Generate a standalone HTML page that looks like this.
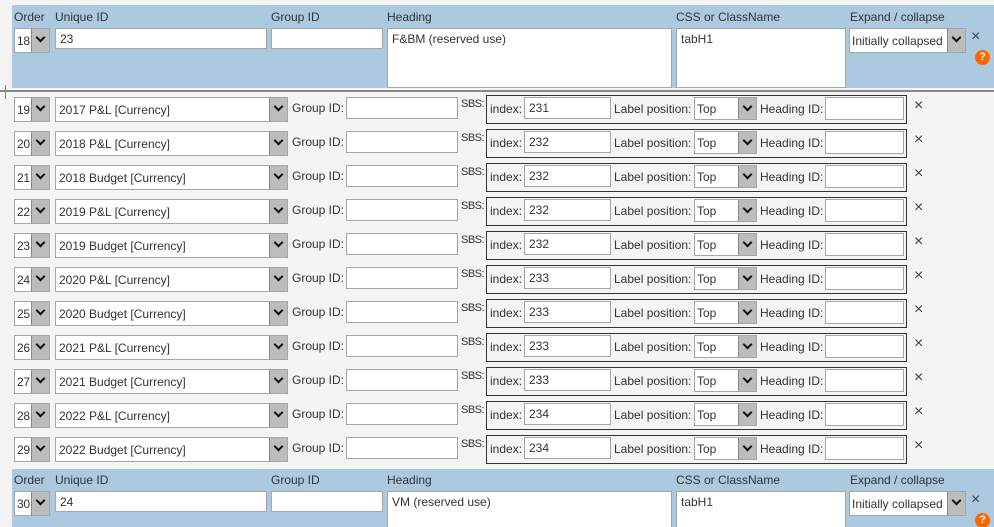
<!DOCTYPE html><html style="overflow:hidden;height:527px"><head><style>
body{margin:0;width:994px;height:527px;background:#f4f4f4;font-family:"Liberation Sans",sans-serif;font-size:12px;color:#333;position:relative;overflow:hidden}
.a{position:absolute;white-space:nowrap}
.hd{position:absolute;left:12px;right:0;background:#abc9df}
.in{position:absolute;background:#fff;border:1px solid #a6a6a6;box-sizing:border-box;padding:3px 4px;white-space:nowrap;overflow:hidden}
.ar{position:absolute;background:#bcbcbc;border-left:1px solid #888;top:0;right:0;bottom:0;width:17px}
.ar:after{content:"";position:absolute;left:5px;top:5px;width:5px;height:5px;border-right:2px solid #111;border-bottom:2px solid #111;transform:rotate(45deg)}
.box{position:absolute;border:1px solid #333;box-sizing:border-box}
.x{position:absolute;font-size:16px;color:#444}
.q{position:absolute;width:15px;height:15px;border-radius:50%;background:#f60;color:#fff;font-weight:bold;font-size:11px;text-align:center;line-height:15px}
.n{padding:5px 1px 5px 2px!important;letter-spacing:-0.3px}
</style></head><body>
<div class="hd" style="top:5px;height:83px"></div>
<div class="a" style="left:0;top:90px;width:994px;height:2px;background:#888"></div>
<div class="a" style="left:5px;top:85px;width:1px;height:14px;background:#888"></div>
<div class="hd" style="top:469px;height:60px"></div>
<div id="c"></div>
<script>
var h='';
function head(y,o,u,hd){
h+=`<div class="a" style="left:14px;top:${y+4}px">Order</div><div class="a" style="left:55px;top:${y+4}px">Unique ID</div><div class="a" style="left:271px;top:${y+4}px">Group ID</div><div class="a" style="left:387px;top:${y+4}px">Heading</div><div class="a" style="left:676px;top:${y+4}px">CSS or ClassName</div><div class="a" style="left:850px;top:${y+4}px">Expand / collapse</div>
<div class="in n" style="left:14px;top:${y+22}px;width:36px;height:25px">${o}<div class="ar"></div></div>
<div class="in" style="left:55px;top:${y+22}px;width:212px;height:21px">${u}</div>
<div class="in" style="left:271px;top:${y+22}px;width:112px;height:21px"></div>
<div class="in" style="left:387px;top:${y+22}px;width:285px;height:60px">${hd}</div>
<div class="in" style="left:676px;top:${y+22}px;width:170px;height:60px">tabH1</div>
<div class="in" style="left:849px;top:${y+22}px;width:117px;height:25px;padding:5px 2px">Initially collapsed<div class="ar"></div></div>
<div class="x" style="left:971px;top:${y+22}px">×</div><div class="q" style="left:975px;top:${y+44}px">?</div>`;}
head(6,18,'23','F&amp;BM (reserved use)');
head(469,30,'24','VM (reserved use)');
var names=['2017 P&amp;L','2018 P&amp;L','2018 Budget','2019 P&amp;L','2019 Budget','2020 P&amp;L','2020 Budget','2021 P&amp;L','2021 Budget','2022 P&amp;L','2022 Budget'];
var idx=[231,232,232,232,232,233,233,233,233,234,234];
for(var i=0;i<11;i++){var y=97+34*i;
h+=`<div class="in n" style="left:14px;top:${y}px;width:36px;height:25px">${19+i}<div class="ar"></div></div>
<div class="in" style="left:55px;top:${y}px;width:233px;height:25px;padding:5px 3px">${names[i]} [Currency]<div class="ar"></div></div>
<div class="a" style="left:292px;top:${y+4}px">Group ID:</div>
<div class="in" style="left:346px;top:${y}px;width:112px;height:22px"></div>
<div class="a" style="left:461px;top:${y+1}px;font-size:11px;letter-spacing:-0.5px">SBS:</div>
<div class="box" style="left:486px;top:${y-2}px;width:421px;height:29px"></div>
<div class="a" style="left:490px;top:${y+5}px">index:</div>
<div class="in" style="left:524px;top:${y}px;width:87px;height:22px">${idx[i]}</div>
<div class="a" style="left:614px;top:${y+5}px">Label position:</div>
<div class="in" style="left:694px;top:${y}px;width:63px;height:23px;padding:4px 2px">Top<div class="ar"></div></div>
<div class="a" style="left:760px;top:${y+5}px">Heading ID:</div>
<div class="in" style="left:825px;top:${y}px;width:79px;height:23px"></div>
<div class="x" style="left:914px;top:${y}px">×</div>`;}
document.getElementById('c').innerHTML=h;
</script>
</body></html>
